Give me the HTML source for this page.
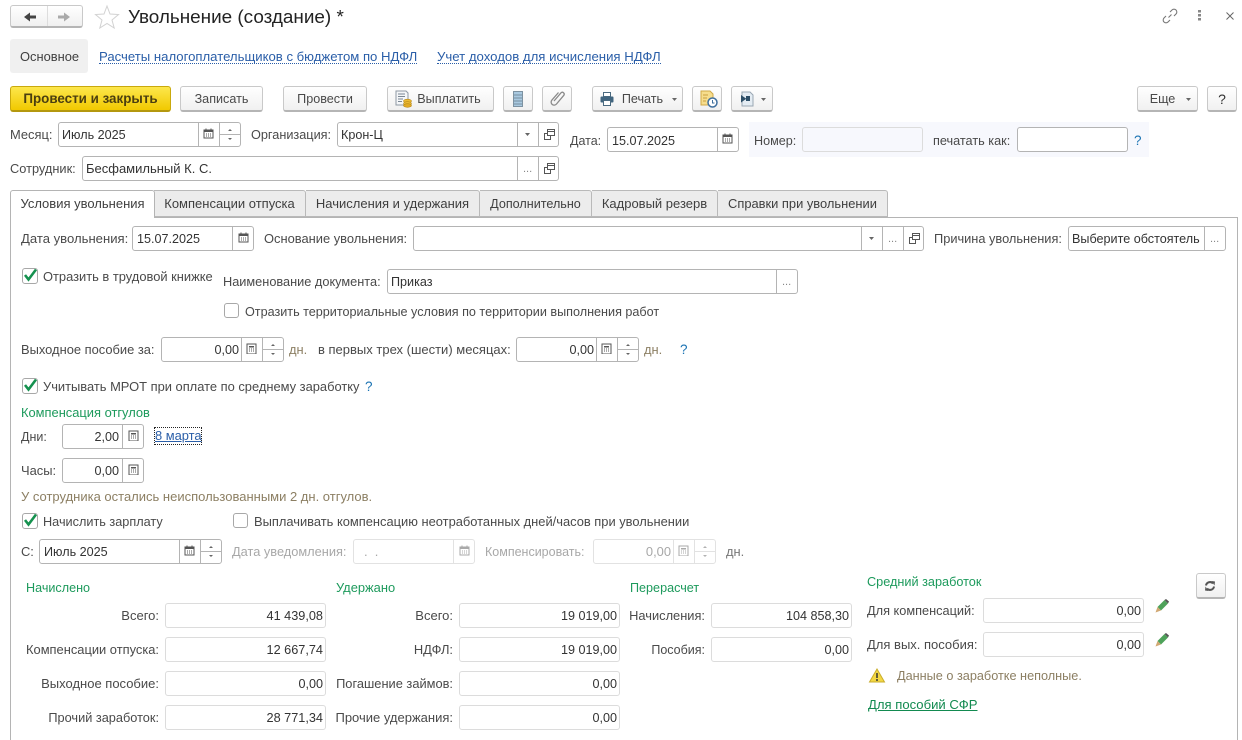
<!DOCTYPE html>
<html lang="ru"><head><meta charset="utf-8"><title>Увольнение (создание)</title>
<style>
html,body{margin:0;padding:0;background:#fff}
#p{position:relative;width:1242px;height:740px;overflow:hidden;background:#fff;font:12.9px/16px "Liberation Sans",sans-serif;color:#4a4a4a}
#p *{box-sizing:border-box}
.t{position:absolute;white-space:nowrap;height:16px;line-height:16px;margin-top:1px}
.r{text-align:right}
.v{color:#333;font-size:12.6px}
.g{color:#1d9a5c}
.o{color:#8c7f63}
.q{color:#1b73b3;font-size:13.5px}
.x{color:#a8a8a8}
.l{color:#2a5ea8;border-bottom:1px dotted #2a5ea8;height:15px}
.f{position:absolute;border:1px solid #b4b4b4;border-radius:3px;background:#fff}
.ro{border-color:#dcdcdc}
.dis{border-color:#e2e2e2}
.d{position:absolute;width:1px;background:#b4b4b4}
.b{position:absolute;top:86px;height:26px;border:1px solid #c9c9c9;border-bottom:2px solid #b5b5b5;border-radius:3px;background:linear-gradient(#fff,#f0f0f0);text-align:center;line-height:24px;color:#4a4a4a;white-space:nowrap;font-size:12.6px}
.tab{position:absolute;top:190px;height:27px;border:1px solid #b9b9b9;border-left:0;border-radius:0 3px 0 0;background:#ececec;line-height:26px;color:#3f3f3f;text-align:center;white-space:nowrap}
.c{position:absolute;width:16px;height:16px;border:1px solid #a8a8a8;border-radius:3px;background:#fff}
.e{color:#888;font-size:11px;margin-top:0}
svg{position:absolute;overflow:visible}
</style></head><body>
<div id="p">
<svg width="0" height="0"><defs>
<symbol id="cal" viewBox="0 0 11 11"><rect x="1" y="2" width="9" height="8" fill="#fff" stroke="#555"/><rect x="1" y="2" width="9" height="2" fill="#555"/><path d="M3 0.5v2M8 0.5v2" stroke="#555"/><path d="M3 6h1M5 6h1M7 6h1M3 8h1M5 8h1M7 8h1" stroke="#555"/></symbol>
<symbol id="calc" viewBox="0 0 11 11"><rect x="1" y="1" width="9" height="10" fill="#fff" stroke="#555"/><rect x="3" y="3" width="5" height="1.5" fill="#555"/><path d="M3 6h1M5 6h1M7 6h1M3 8h1M5 8h1M7 8h1" stroke="#555"/></symbol>
<symbol id="open" viewBox="0 0 11 11"><rect x="3.500" y=".5" width="7" height="6" fill="#fff" stroke="#555"/><path d="M3.500 2.500h7" stroke="#555"/><path d="M3.500 4.500h-3v6h6v-3.500" fill="none" stroke="#555"/></symbol>
<symbol id="chk" viewBox="0 0 16 16"><path d="M3 8l3.500 4.500L14 2.500" fill="none" stroke="#15914f" stroke-width="2.600"/></symbol>
<symbol id="pen" viewBox="0 0 14 14"><path d="M2.500 8L9.500 1 13 4.500 6 11.500z" fill="#4ea25a"/><path d="M9.500 1L11 0l3 2.500-1 2z" fill="#555"/><path d="M2.500 8L.5 13.500 6 11.500z" fill="#d1a873"/></symbol>
</defs></svg>

<!-- top nav -->
<div class="b" style="left:10px;top:5px;width:73px;height:23px"></div>
<div class="d" style="left:47px;top:6px;height:20px;background:#ddd"></div>
<svg style="left:22px;top:11px" width="50" height="12"><path d="M2 6l6-4.500v3H14v3H8v3z" fill="#444"/><path d="M48 6l-6-4.500v3H36v3h6v3z" fill="#aaa"/></svg>
<svg style="left:95px;top:5px" width="24" height="23"><path d="M12 1l3 8 8.500 .5-6.500 5.500 2.200 8L12 18.500 4.800 23 7 15 .5 9.500 9 9z" fill="#fff" stroke="#d2d2d2"/></svg>
<div class="t" style="left:128px;top:6px;height:22px;line-height:22px;font-size:18.9px;color:#222">Увольнение (создание) *</div>
<svg style="left:1162px;top:8px" width="16" height="16"><path d="M6.500 9.500l3-3M8 4l2-2a2.800 2.800 0 0 1 4 4l-2 2M8 12l-2 2a2.800 2.800 0 0 1-4-4l2-2" fill="none" stroke="#777" stroke-width="1.100"/></svg>
<svg style="left:1197px;top:9px" width="5" height="13"><path d="M1 1h3v2.500H1zM1 5h3v2.500H1zM1 9h3v2.500H1z" fill="#888"/></svg>
<svg style="left:1226px;top:12px" width="8" height="8"><path d="M.5 .5l7 7M7.500 .5l-7 7" stroke="#666"/></svg>

<!-- command links -->
<div style="position:absolute;left:10px;top:39px;width:78px;height:34px;background:#f0f0f0;border-radius:3px"></div>
<div class="t" style="left:20px;top:48px;color:#3f3f3f">Основное</div>
<div class="t l" style="left:99px;top:48px;font-size:13.150px">Расчеты налогоплательщиков с бюджетом по НДФЛ</div>
<div class="t l" style="left:437px;top:48px;font-size:13.200px">Учет доходов для исчисления НДФЛ</div>

<!-- buttons -->
<div class="b" style="left:10px;width:161px;background:linear-gradient(#fde74c,#f1c900);border-color:#c9a90d;border-bottom-color:#b4980f;color:#4b3f10;font-weight:bold;font-size:13.400px">Провести и закрыть</div>
<div class="b" style="left:180px;width:83px">Записать</div>
<div class="b" style="left:283px;width:84px">Провести</div>
<div class="b" style="left:387px;width:107px;padding-left:17px">Выплатить</div>
<svg style="left:395px;top:90px" width="18" height="18"><path d="M1 1h10l2 2v12H1z" fill="#f4f6f8" stroke="#8e98a3"/><path d="M3 4h7M3 6.500h7M3 9h5M3 11.500h4" stroke="#7a8794"/><ellipse cx="12.500" cy="11" rx="4" ry="1.800" fill="#edbb32" stroke="#b58717" stroke-width=".6"/><ellipse cx="12.500" cy="13.500" rx="4" ry="1.800" fill="#edbb32" stroke="#b58717" stroke-width=".6"/><ellipse cx="12.500" cy="15.500" rx="4" ry="1.800" fill="#e2aa22" stroke="#b58717" stroke-width=".6"/></svg>
<div class="b" style="left:503px;width:30px"></div>
<svg style="left:513px;top:91px" width="10" height="16"><rect x=".5" y=".5" width="9" height="15" fill="#a9c9e0" stroke="#7d92a1"/><path d="M1 4h8M1 7h8M1 10h8M1 13h8" stroke="#7890a1"/></svg>
<div class="b" style="left:542px;width:30px"></div>
<svg style="left:550px;top:90px" width="15" height="16"><path d="M4 11L11 2.800a1.900 1.900 0 0 1 2.900 2.400L6.500 14a3 3 0 0 1-4.700-3.800L8.500 2.500" fill="none" stroke="#8a8a8a" stroke-width="1.300"/></svg>
<div class="b" style="left:592px;width:91px;padding-left:10px">Печать</div>
<svg style="left:600px;top:92px" width="14" height="14"><rect x="3.500" y=".5" width="7" height="4" fill="#fff" stroke="#4a6a80"/><rect x=".5" y="4.500" width="13" height="6" rx="1" fill="#41657f"/><rect x="3.500" y="8.500" width="7" height="5" fill="#fff" stroke="#4a6a80"/></svg>
<svg style="left:672px;top:98px" width="5" height="3"><path d="M0 0h5L2.500 3z" fill="#666"/></svg>
<div class="b" style="left:692px;width:30px"></div>
<svg style="left:700px;top:90px" width="18" height="18"><path d="M1 1h9l3 3v11H1z" fill="#f6dd8d" stroke="#d0a947"/><path d="M3 5h5M3 8h4M3 11h3" stroke="#c99f3e"/><circle cx="12.500" cy="12.500" r="4.500" fill="#fff" stroke="#3f6f9e" stroke-width="1.500"/><path d="M12.500 10v3h2" stroke="#3f6f9e" fill="none"/></svg>
<div class="b" style="left:731px;width:42px"></div>
<svg style="left:739px;top:91px" width="16" height="16"><path d="M3 1h8l3 3v11H3z" fill="#e4ecf3" stroke="#9aa7b3"/><path d="M1 4l5 3.500V5h4v5H6V8l-5 3.500z" fill="#2d4f68" transform="translate(1 0)"/></svg>
<svg style="left:761px;top:98px" width="5" height="3"><path d="M0 0h5L2.500 3z" fill="#666"/></svg>
<div class="b" style="left:1137px;width:61px;padding-right:10px">Еще</div>
<svg style="left:1186px;top:98px" width="5" height="3"><path d="M0 0h5L2.500 3z" fill="#666"/></svg>
<div class="b" style="left:1207px;width:30px;color:#333;font-size:14px">?</div>

<!-- header fields -->
<div class="t" style="left:10px;top:126px">Месяц:</div>
<div class="f" style="left:58px;top:122px;width:183px;height:25px"></div><div class="t v" style="left:62px;top:126px">Июль 2025</div>
<div class="d" style="left:198px;top:122px;height:25px"></div><div class="d" style="left:219px;top:122px;height:25px"></div><div class="d" style="left:219px;top:134px;height:1px;width:22px"></div>
<svg style="left:203px;top:128px" width="11" height="11"><use href="#cal"/></svg>
<svg style="left:227px;top:129px" width="6" height="12"><path d="M3 0l2 2H1zM1 9h4l-2 2z" fill="#666"/></svg>
<div class="t" style="left:251px;top:126px;font-size:12.700px">Организация:</div>
<div class="f" style="left:337px;top:122px;width:222px;height:25px"></div><div class="t v" style="left:341px;top:126px">Крон-Ц</div>
<div class="d" style="left:517px;top:122px;height:25px"></div><div class="d" style="left:538px;top:122px;height:25px"></div>
<svg style="left:525px;top:133px" width="5" height="3"><path d="M0 0h5L2.500 3z" fill="#666"/></svg>
<svg style="left:544px;top:129px" width="11" height="11"><use href="#open"/></svg>

<div class="t" style="left:570px;top:132px;font-size:12.500px">Дата:</div>
<div class="f" style="left:607px;top:127px;width:132px;height:25px"></div><div class="t v" style="left:612px;top:132px">15.07.2025</div>
<div class="d" style="left:717px;top:127px;height:25px"></div>
<svg style="left:722px;top:133px" width="11" height="11"><use href="#cal"/></svg>

<div style="position:absolute;left:749px;top:122px;width:400px;height:35px;background:#f7f8fd"></div>
<div class="t" style="left:754px;top:132px;font-size:12.600px">Номер:</div>
<div class="f" style="left:802px;top:127px;width:121px;height:25px;background:#f7f8fd;border-color:#dcdcdc"></div>
<div class="t" style="left:933px;top:132px;font-size:12.700px">печатать как:</div>
<div class="f" style="left:1017px;top:127px;width:111px;height:25px"></div>
<div class="t q" style="left:1134px;top:132px">?</div>

<div class="t" style="left:10px;top:160px;font-size:12.800px">Сотрудник:</div>
<div class="f" style="left:82px;top:156px;width:477px;height:25px"></div><div class="t v" style="left:86px;top:160px;font-size:13px">Бесфамильный К. С.</div>
<div class="d" style="left:517px;top:156px;height:25px"></div><div class="d" style="left:538px;top:156px;height:25px"></div>
<div class="t e" style="left:523px;top:161px">...</div>
<svg style="left:544px;top:163px" width="11" height="11"><use href="#open"/></svg>

<!-- panel + tabs -->
<div style="position:absolute;left:10px;top:217px;width:1228px;height:540px;border:1px solid #b4b4b4"></div>
<div class="tab" style="left:154px;width:152px;font-size:13px">Компенсации отпуска</div>
<div class="tab" style="left:306px;width:174px;font-size:13px">Начисления и удержания</div>
<div class="tab" style="left:480px;width:112px;font-size:12.600px">Дополнительно</div>
<div class="tab" style="left:592px;width:126px;font-size:13px">Кадровый резерв</div>
<div class="tab" style="left:718px;width:170px">Справки при увольнении</div>
<div class="tab" style="left:10px;width:145px;height:28px;background:#fff;border:1px solid #b4b4b4;border-bottom:0;border-radius:3px 3px 0 0;font-size:13px">Условия увольнения</div>

<!-- row 1 -->
<div class="t" style="left:21px;top:230px;font-size:13.100px">Дата увольнения:</div>
<div class="f" style="left:132px;top:226px;width:122px;height:25px"></div><div class="t v" style="left:137px;top:230px">15.07.2025</div>
<div class="d" style="left:232px;top:226px;height:25px"></div>
<svg style="left:238px;top:232px" width="11" height="11"><use href="#cal"/></svg>
<div class="t" style="left:264px;top:230px">Основание увольнения:</div>
<div class="f" style="left:413px;top:226px;width:511px;height:25px"></div>
<div class="d" style="left:861px;top:226px;height:25px"></div><div class="d" style="left:882px;top:226px;height:25px"></div><div class="d" style="left:903px;top:226px;height:25px"></div>
<svg style="left:869px;top:237px" width="5" height="3"><path d="M0 0h5L2.500 3z" fill="#666"/></svg>
<div class="t e" style="left:888px;top:231px">...</div>
<svg style="left:909px;top:233px" width="11" height="11"><use href="#open"/></svg>
<div class="t" style="left:934px;top:230px;font-size:12.800px">Причина увольнения:</div>
<div class="f" style="left:1068px;top:226px;width:158px;height:25px"></div><div class="t v" style="left:1072px;top:230px;width:130px;overflow:hidden">Выберите обстоятель</div>
<div class="d" style="left:1204px;top:226px;height:25px"></div>
<div class="t e" style="left:1210px;top:231px">...</div>

<!-- row 2 -->
<div class="c" style="left:22px;top:268px"></div><svg style="left:22px;top:267px" width="16" height="16"><use href="#chk"/></svg>
<div class="t" style="left:43px;top:268px">Отразить в трудовой книжке</div>
<div class="t" style="left:223px;top:273px;font-size:12.750px">Наименование документа:</div>
<div class="f" style="left:387px;top:269px;width:411px;height:25px"></div><div class="t v" style="left:391px;top:273px">Приказ</div>
<div class="d" style="left:776px;top:269px;height:25px"></div>
<div class="t e" style="left:782px;top:274px">...</div>
<div class="c" style="left:224px;top:303px;width:15px;height:15px"></div>
<div class="t" style="left:245px;top:303px;font-size:12.620px">Отразить территориальные условия по территории выполнения работ</div>

<!-- row 3 -->
<div class="t" style="left:21px;top:341px">Выходное пособие за:</div>
<div class="f" style="left:161px;top:337px;width:123px;height:25px"></div><div class="t v r" style="right:1003px;top:341px">0,00</div>
<div class="d" style="left:241px;top:337px;height:25px"></div><div class="d" style="left:262px;top:337px;height:25px"></div><div class="d" style="left:262px;top:349px;height:1px;width:22px"></div>
<svg style="left:246px;top:343px" width="11" height="11"><use href="#calc"/></svg>
<svg style="left:270px;top:344px" width="6" height="12"><path d="M3 0l2 2H1zM1 9h4l-2 2z" fill="#666"/></svg>
<div class="t o" style="left:289px;top:341px">дн.</div>
<div class="t" style="left:318px;top:341px;font-size:13px">в первых трех (шести) месяцах:</div>
<div class="f" style="left:516px;top:337px;width:123px;height:25px"></div><div class="t v r" style="right:648px;top:341px">0,00</div>
<div class="d" style="left:596px;top:337px;height:25px"></div><div class="d" style="left:617px;top:337px;height:25px"></div><div class="d" style="left:617px;top:349px;height:1px;width:22px"></div>
<svg style="left:601px;top:343px" width="11" height="11"><use href="#calc"/></svg>
<svg style="left:625px;top:344px" width="6" height="12"><path d="M3 0l2 2H1zM1 9h4l-2 2z" fill="#666"/></svg>
<div class="t o" style="left:644px;top:341px">дн.</div>
<div class="t q" style="left:680px;top:341px">?</div>

<!-- mrot -->
<div class="c" style="left:22px;top:378px"></div><svg style="left:22px;top:377px" width="16" height="16"><use href="#chk"/></svg>
<div class="t" style="left:43px;top:378px">Учитывать МРОТ при оплате по среднему заработку</div>
<div class="t q" style="left:365px;top:378px">?</div>
<div class="t g" style="left:21px;top:404px">Компенсация отгулов</div>
<div class="t" style="left:21px;top:428px;font-size:12.500px">Дни:</div>
<div class="f" style="left:62px;top:424px;width:82px;height:25px"></div><div class="t v r" style="right:1123px;top:428px">2,00</div>
<div class="d" style="left:122px;top:424px;height:25px"></div>
<svg style="left:128px;top:430px" width="11" height="11"><use href="#calc"/></svg>
<div class="t" style="left:154px;top:426px;width:48px;height:18px;border:1px dotted #222;color:#2a5ea8;text-decoration:underline;padding-left:0">8 марта</div>
<div class="t" style="left:21px;top:462px">Часы:</div>
<div class="f" style="left:62px;top:458px;width:82px;height:25px"></div><div class="t v r" style="right:1123px;top:462px">0,00</div>
<div class="d" style="left:122px;top:458px;height:25px"></div>
<svg style="left:128px;top:464px" width="11" height="11"><use href="#calc"/></svg>
<div class="t o" style="left:21px;top:488px;font-size:13px">У сотрудника остались неиспользованными 2 дн. отгулов.</div>

<!-- salary -->
<div class="c" style="left:22px;top:513px"></div><svg style="left:22px;top:512px" width="16" height="16"><use href="#chk"/></svg>
<div class="t" style="left:43px;top:513px;font-size:12.700px">Начислить зарплату</div>
<div class="c" style="left:233px;top:513px;width:15px;height:15px"></div>
<div class="t" style="left:254px;top:513px">Выплачивать компенсацию неотработанных дней/часов при увольнении</div>
<div class="t" style="left:21px;top:543px">С:</div>
<div class="f" style="left:39px;top:539px;width:183px;height:25px"></div><div class="t v" style="left:44px;top:543px">Июль 2025</div>
<div class="d" style="left:179px;top:539px;height:25px"></div><div class="d" style="left:200px;top:539px;height:25px"></div><div class="d" style="left:200px;top:551px;height:1px;width:22px"></div>
<svg style="left:184px;top:545px" width="11" height="11"><use href="#cal"/></svg>
<svg style="left:208px;top:546px" width="6" height="12"><path d="M3 0l2 2H1zM1 9h4l-2 2z" fill="#666"/></svg>
<div class="t x" style="left:232px;top:543px;font-size:12.800px">Дата уведомления:</div>
<div class="f dis" style="left:353px;top:539px;width:122px;height:25px"></div><div class="t x" style="left:364px;top:543px">.&nbsp;&nbsp;.</div>
<div class="d" style="left:453px;top:539px;height:25px;background:#e2e2e2"></div>
<svg style="left:459px;top:545px;opacity:.5" width="11" height="11"><use href="#cal"/></svg>
<div class="t x" style="left:485px;top:543px;font-size:12.500px">Компенсировать:</div>
<div class="f dis" style="left:593px;top:539px;width:123px;height:25px"></div><div class="t x r" style="right:571px;top:543px">0,00</div>
<div class="d" style="left:673px;top:539px;height:25px;background:#e2e2e2"></div><div class="d" style="left:694px;top:539px;height:25px;background:#e2e2e2"></div><div class="d" style="left:694px;top:551px;height:1px;width:22px;background:#e2e2e2"></div>
<svg style="left:678px;top:545px;opacity:.5" width="11" height="11"><use href="#calc"/></svg>
<svg style="left:702px;top:546px;opacity:.5" width="6" height="12"><path d="M3 0l2 2H1zM1 9h4l-2 2z" fill="#666"/></svg>
<div class="t" style="left:726px;top:543px;color:#777">дн.</div>

<!-- totals -->
<div class="t g" style="left:26px;top:579px;font-size:12.600px">Начислено</div>
<div class="t g" style="left:336px;top:579px">Удержано</div>
<div class="t g" style="left:630px;top:579px;font-size:12.600px">Перерасчет</div>
<div class="t g" style="left:867px;top:573px;font-size:12.700px">Средний заработок</div>

<div class="t r" style="right:1083px;top:607px;font-size:13px">Всего:</div>
<div class="f ro" style="left:165px;top:603px;width:161px;height:25px"></div><div class="t v r" style="right:919px;top:607px;font-size:12.700px">41 439,08</div>
<div class="t r" style="right:1083px;top:641px">Компенсации отпуска:</div>
<div class="f ro" style="left:165px;top:637px;width:161px;height:25px"></div><div class="t v r" style="right:919px;top:641px;font-size:12.700px">12 667,74</div>
<div class="t r" style="right:1083px;top:675px;font-size:13px">Выходное пособие:</div>
<div class="f ro" style="left:165px;top:671px;width:161px;height:25px"></div><div class="t v r" style="right:919px;top:675px">0,00</div>
<div class="t r" style="right:1083px;top:709px;font-size:12.750px">Прочий заработок:</div>
<div class="f ro" style="left:165px;top:705px;width:161px;height:25px"></div><div class="t v r" style="right:919px;top:709px;font-size:12.700px">28 771,34</div>

<div class="t r" style="right:789px;top:607px;font-size:13px">Всего:</div>
<div class="f ro" style="left:459px;top:603px;width:161px;height:25px"></div><div class="t v r" style="right:625px;top:607px">19 019,00</div>
<div class="t r" style="right:789px;top:641px">НДФЛ:</div>
<div class="f ro" style="left:459px;top:637px;width:161px;height:25px"></div><div class="t v r" style="right:625px;top:641px">19 019,00</div>
<div class="t r" style="right:789px;top:675px;font-size:12.850px">Погашение займов:</div>
<div class="f ro" style="left:459px;top:671px;width:161px;height:25px"></div><div class="t v r" style="right:625px;top:675px">0,00</div>
<div class="t r" style="right:789px;top:709px;font-size:13px">Прочие удержания:</div>
<div class="f ro" style="left:459px;top:705px;width:161px;height:25px"></div><div class="t v r" style="right:625px;top:709px">0,00</div>

<div class="t r" style="right:537px;top:607px;font-size:12.850px">Начисления:</div>
<div class="f ro" style="left:711px;top:603px;width:141px;height:25px"></div><div class="t v r" style="right:393px;top:607px">104 858,30</div>
<div class="t r" style="right:537px;top:641px;font-size:12.500px">Пособия:</div>
<div class="f ro" style="left:711px;top:637px;width:141px;height:25px"></div><div class="t v r" style="right:393px;top:641px">0,00</div>

<div class="t" style="left:867px;top:602px;font-size:12.750px">Для компенсаций:</div>
<div class="f ro" style="left:983px;top:598px;width:161px;height:25px"></div><div class="t v r" style="right:101px;top:602px">0,00</div>
<svg style="left:1155px;top:599px" width="14" height="14"><use href="#pen"/></svg>
<div class="t" style="left:867px;top:636px;font-size:13px">Для вых. пособия:</div>
<div class="f ro" style="left:983px;top:632px;width:161px;height:25px"></div><div class="t v r" style="right:101px;top:636px">0,00</div>
<svg style="left:1155px;top:633px" width="14" height="14"><use href="#pen"/></svg>
<svg style="left:869px;top:668px" width="16" height="15"><path d="M8 1l7.500 13H.5z" fill="#f3d743" stroke="#c9ad2c"/><path d="M8 5v5M8 11v2" stroke="#333" stroke-width="1.500"/></svg>
<div class="t o" style="left:897px;top:667px;font-size:12.700px">Данные о заработке неполные.</div>
<div class="t" style="left:868px;top:696px;color:#128a50;text-decoration:underline;font-size:13.100px">Для пособий СФР</div>
<div class="b" style="left:1196px;top:573px;width:30px;height:26px"></div>
<svg style="left:1205px;top:581px" width="10" height="10"><path d="M1 4.500A4 4 0 0 1 8 2.500M9 5.500A4 4 0 0 1 2 7.500" fill="none" stroke="#555" stroke-width="2"/><path d="M6.500 0L10 .5 9.500 4.500zM3.500 10L0 9.500 .5 5.500z" fill="#555"/></svg>
</div>
</body></html>
